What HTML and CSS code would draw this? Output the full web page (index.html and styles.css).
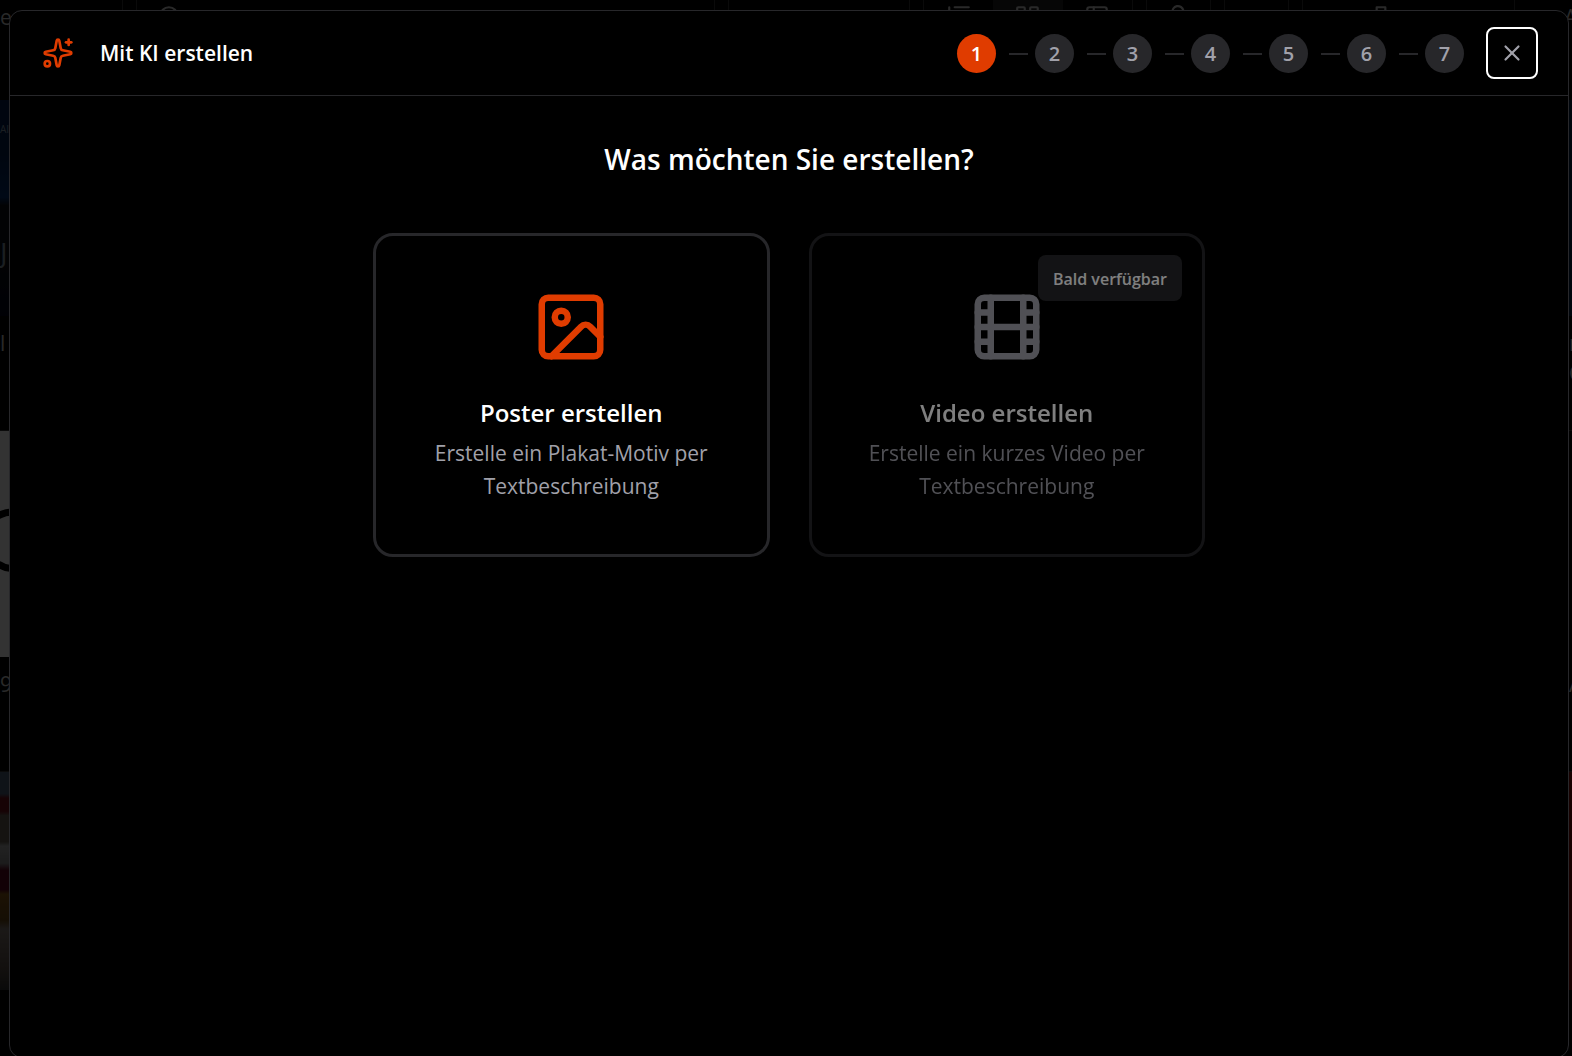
FILE: index.html
```html
<!DOCTYPE html>
<html lang="de">
  <head>
    <meta charset="UTF-8" />
    <meta name="viewport" content="width=device-width, initial-scale=1.0" />
    <title>Mit KI erstellen</title>
    <link rel="stylesheet" href="styles.css">
  </head>
  <body>
    <!-- Media library behind the dialog -->
    <div class="library" aria-hidden="true">
      <div class="toolbar">
        <span class="toolbar-label toolbar-start">e</span>
        <div class="tool tool-search">
          <svg class="tool-icon" viewBox="0 0 24 24"><circle cx="11" cy="11" r="8" /></svg>
        </div>
        <div class="tool tool-sort"></div>
        <div class="tool tool-views">
          <span class="view">
            <svg class="tool-icon" viewBox="0 0 24 24"><path d="M3 3v8M8 3h13M8 8h13" /></svg>
          </span>
          <span class="view active">
            <svg class="tool-icon" viewBox="0 0 24 24"><rect x="2" y="3" width="7" height="8" rx="1" /><rect x="14" y="3" width="7" height="8" rx="1" /></svg>
          </span>
          <span class="view">
            <svg class="tool-icon" viewBox="0 0 24 24"><rect x="3" y="3" width="18" height="18" rx="2" /><path d="M9 3v18" /></svg>
          </span>
        </div>
        <div class="tool tool-small">
          <svg class="tool-icon" viewBox="0 0 24 24"><path d="M6 14V8a5 5 0 0 1 10-2l3 3" /></svg>
        </div>
        <div class="tool tool-small"></div>
        <div class="tool tool-upload">
          <svg class="tool-icon" viewBox="0 0 24 24"><path d="M8 8V3h8v5" /></svg>
        </div>
        <span class="toolbar-label toolbar-end">A</span>
      </div>
      <div class="tiles">
        <div class="tile-column">
          <div class="thumb thumb-night">
            <p class="thumb-caption">AI</p>
            <p class="thumb-title">J</p>
          </div>
          <div class="tile-name">l</div>
          <div class="thumb thumb-sketch">
            <svg class="sketch" viewBox="0 0 12 225"><path d="M0 84q5-3 12-3M0 134q6 4 12 3" /></svg>
          </div>
          <div class="tile-name">9</div>
          <div class="thumb thumb-street"></div>
        </div>
        <div class="tile-column tile-column-end">
          <div class="thumb thumb-navy"></div>
          <div class="tile-name">r C</div>
          <div class="thumb"></div>
          <div class="tile-name">A</div>
          <div class="thumb thumb-red"></div>
        </div>
      </div>
    </div>

    <div class="overlay">
      <section class="dialog" role="dialog" aria-modal="true" aria-labelledby="dialog-title">
        <header class="dialog-header">
          <svg class="sparkles" viewBox="0 0 24 24" aria-hidden="true">
            <path d="M11.017 2.814a1 1 0 0 1 1.966 0l1.051 5.558a2 2 0 0 0 1.594 1.594l5.558 1.051a1 1 0 0 1 0 1.966l-5.558 1.051a2 2 0 0 0-1.594 1.594l-1.051 5.558a1 1 0 0 1-1.966 0l-1.051-5.558a2 2 0 0 0-1.594-1.594l-5.558-1.051a1 1 0 0 1 0-1.966l5.558-1.051a2 2 0 0 0 1.594-1.594z" />
            <path d="M20 2v4" />
            <path d="M22 4h-4" />
            <circle cx="4" cy="20" r="2" />
          </svg>
          <h1 class="dialog-title" id="dialog-title">Mit KI erstellen</h1>
          <ol class="steps" aria-label="Schritte">
            <li class="step active" aria-current="step">1</li>
            <li class="step">2</li>
            <li class="step">3</li>
            <li class="step">4</li>
            <li class="step">5</li>
            <li class="step">6</li>
            <li class="step">7</li>
          </ol>
          <button class="close-button" type="button" aria-label="Schließen">
            <svg class="close-icon" viewBox="0 0 24 24" aria-hidden="true">
              <path d="M18 6 6 18" />
              <path d="m6 6 12 12" />
            </svg>
          </button>
        </header>

        <div class="dialog-body">
          <h2 class="question">Was möchten Sie erstellen?</h2>
          <div class="choices">
            <button class="choice" type="button">
              <svg class="choice-icon" viewBox="0 0 24 24" aria-hidden="true">
                <rect width="18" height="18" x="3" y="3" rx="2" ry="2" />
                <circle cx="9" cy="9" r="2" />
                <path d="m21 15-3.086-3.086a2 2 0 0 0-2.828 0L6 21" />
              </svg>
              <span class="choice-title">Poster erstellen</span>
              <span class="choice-text">Erstelle ein Plakat-Motiv per Textbeschreibung</span>
            </button>
            <button class="choice" type="button" disabled>
              <span class="badge">Bald verfügbar</span>
              <svg class="choice-icon" viewBox="0 0 24 24" aria-hidden="true">
                <rect width="18" height="18" x="3" y="3" rx="2" />
                <path d="M7 3v18" />
                <path d="M3 7.5h4" />
                <path d="M3 12h18" />
                <path d="M3 16.5h4" />
                <path d="M17 3v18" />
                <path d="M17 7.5h4" />
                <path d="M17 16.5h4" />
              </svg>
              <span class="choice-title">Video erstellen</span>
              <span class="choice-text">Erstelle ein kurzes Video per Textbeschreibung</span>
            </button>
          </div>
        </div>
      </section>
    </div>
  </body>
</html>
```

FILE: styles.css
```css
* {
  padding: 0;
  margin: 0;
  box-sizing: border-box;
}

body {
  height: 100vh;
  overflow: hidden;
  background-color: #000;
  color: #fff;
  font-family: "Segoe UI", "Open Sans", sans-serif;
}

svg {
  display: block;
  flex-shrink: 0;
  fill: none;
  stroke: currentColor;
  stroke-width: 2;
  stroke-linecap: round;
  stroke-linejoin: round;
}

/* Library */

.library {
  height: 100%;
  overflow: hidden;
  color: #ccc;
  font-size: 21px;
}

.toolbar {
  display: flex;
  gap: 13px;
  height: 40px;
}

.toolbar-label {
  padding-top: 3px;
}

.toolbar-start {
  width: 123px;
  border-right: 1px solid #333;
}

.toolbar-end {
  width: 8px;
  margin-left: 36px;
}

.tool {
  display: flex;
  align-items: flex-start;
  border: 1px solid #333;
  border-width: 0 1px;
}

.tool-icon {
  width: 26px;
  height: 26px;
  margin-top: 4px;
}

.tool-search {
  flex: 1;
  padding-left: 20px;
}

.tool-sort {
  width: 182px;
}

.tool-views {
  width: 210px;
}

.view {
  display: flex;
  flex: 1;
  justify-content: center;
  height: 100%;
}

.view.active {
  background-color: #222;
}

.tool-small {
  justify-content: center;
  width: 65px;
}

.tool-upload {
  width: 213px;
  padding-left: 65px;
}

.tiles {
  display: flex;
  justify-content: space-between;
  padding-top: 60px;
}

.tile-column {
  width: 12px;
}

.tile-column-end {
  width: 3px;
}

.tile-name {
  height: 115px;
  padding-top: 12px;
  border-bottom: 1px solid #333;
  line-height: 30px;
}

.thumb {
  height: 226px;
  overflow: hidden;
}

.thumb-night {
  height: 216px;
  padding-top: 22px;
  background: linear-gradient(#001a4a, #00204d 25%, #002f70 45%, #0e1114 49%, #0e1114 70%, #00041c);
  color: #89a;
}

.thumb-caption {
  font-size: 10px;
}

.thumb-title {
  margin-top: 96px;
  font-size: 28px;
  line-height: 40px;
}

.thumb-sketch {
  background-color: #fff;
}

.sketch {
  height: 225px;
  stroke: #000;
  stroke-width: 7;
}

.thumb-street {
  height: 218px;
  background: linear-gradient(#4a6078 10%, #70101c 12%, #70101c 18%, #6a6258 20%, #6a6258 32%, #aaa 34%, #888 42%, #5c0820 45%, #5c0820 54%, #8a5a18 56%, #6a4818 68%, #857b73 72%, #5d5248 90%, #333);
}

.thumb-navy {
  height: 216px;
  background-color: #002040;
}

.thumb-red {
  height: 218px;
  background-color: #780c08;
}

/* Dialog */

.overlay {
  position: fixed;
  inset: 0;
  padding: 10px 3px 0 9px;
  background-color: rgba(0, 0, 0, 0.8);
}

.dialog {
  height: calc(100% + 2px);
  border: 1px solid #27272a;
  border-radius: 13px;
  background-color: #000;
}

.dialog-header {
  display: flex;
  align-items: center;
  height: 85px;
  padding: 0 30px 0 32px;
  border-bottom: 1px solid #27272a;
}

.sparkles {
  width: 32px;
  height: 32px;
  color: #e03c00;
}

.dialog-title {
  flex: 1;
  margin-left: 26px;
  font-size: 21px;
  font-weight: 600;
}

.steps {
  display: flex;
  gap: 39px;
  margin-right: 22px;
  list-style: none;
}

.step {
  position: relative;
  width: 39px;
  height: 39px;
  border-radius: 50%;
  background-color: #27272a;
  color: #a1a1aa;
  font-size: 20px;
  font-weight: 600;
  line-height: 40px;
  text-align: center;
}

.step.active {
  background-color: #e03c00;
  color: #fff;
}

/* Line between two steps */
.step + .step::before {
  content: "";
  position: absolute;
  top: 19px;
  right: 46px;
  width: 19px;
  height: 2px;
  background-color: #27272a;
}

.close-button {
  display: flex;
  align-items: center;
  justify-content: center;
  width: 52px;
  height: 52px;
  border: 2px solid #fff;
  border-radius: 8px;
  background-color: transparent;
  color: #a1a1aa;
  cursor: pointer;
}

.close-icon {
  width: 26px;
  height: 26px;
}

.dialog-body {
  padding: 39px;
}

.question {
  font-size: 28px;
  font-weight: 600;
  line-height: 48px;
  text-align: center;
}

.choices {
  display: grid;
  grid-template-columns: 1fr 1fr;
  gap: 39px;
  max-width: 832px;
  margin: 50px auto 0;
}

.choice {
  display: flex;
  position: relative;
  flex-direction: column;
  align-items: center;
  padding: 52px 39px 51px;
  border: 3px solid #27272a;
  border-radius: 20px;
  background-color: transparent;
  color: #fff;
  font-family: inherit;
  cursor: pointer;
}

.choice:disabled {
  opacity: 0.5;
  cursor: not-allowed;
}

.choice-icon {
  width: 78px;
  height: 78px;
  color: #e03c00;
}

.choice:disabled .choice-icon {
  color: #a1a1aa;
}

.choice-title {
  margin-top: 27px;
  font-size: 24px;
  font-weight: 600;
  line-height: 39px;
}

.choice-text {
  margin-top: 5px;
  color: #a1a1aa;
  font-size: 21px;
  line-height: 33px;
}

.badge {
  position: absolute;
  top: 19px;
  right: 20px;
  height: 46px;
  padding: 0 15px;
  border-radius: 8px;
  background-color: #27272a;
  font-size: 16px;
  font-weight: 600;
  line-height: 48px;
}
```
